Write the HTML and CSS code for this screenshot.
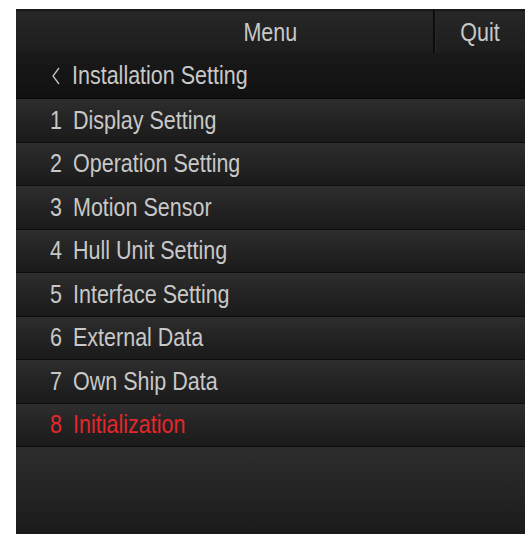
FILE: index.html
```html
<!DOCTYPE html>
<html>
<head>
<meta charset="utf-8">
<link rel="stylesheet" href="styles.css">
</head>
<body>
<div class="panel">
  <div class="topbar">
    <div class="title"><span class="cond cond-center">Menu</span></div>
    <div class="quit"><span class="cond cond-center">Quit</span></div>
  </div>
  <div class="back">
    <svg class="chev" width="8" height="18" viewBox="0 0 8 18"><path d="M7 1 L1 9 L7 17" fill="none" stroke="#c4c4c4" stroke-width="1.3"/></svg>
    <span class="cond">Installation Setting</span>
  </div>
  <ul class="menu">
    <li class="item"><span class="num"><span class="cond">1</span></span><span class="cond">Display Setting</span></li>
    <li class="item"><span class="num"><span class="cond">2</span></span><span class="cond">Operation Setting</span></li>
    <li class="item"><span class="num"><span class="cond">3</span></span><span class="cond">Motion Sensor</span></li>
    <li class="item"><span class="num"><span class="cond">4</span></span><span class="cond">Hull Unit Setting</span></li>
    <li class="item"><span class="num"><span class="cond">5</span></span><span class="cond">Interface Setting</span></li>
    <li class="item"><span class="num"><span class="cond">6</span></span><span class="cond">External Data</span></li>
    <li class="item"><span class="num"><span class="cond">7</span></span><span class="cond">Own Ship Data</span></li>
    <li class="item item-red"><span class="num"><span class="cond">8</span></span><span class="cond">Initialization</span></li>
  </ul>
  <div class="filler"></div>
</div>
</body>
</html>
```
FILE: styles.css
```css
html, body {
  margin: 0;
  padding: 0;
  background: #ffffff;
}
body {
  padding: 9px 0 0 16px;
  font-family: "Liberation Sans", Arial, sans-serif;
}
.panel {
  width: 509px;
  height: 525px;
  display: flex;
  flex-direction: column;
  background: #1c1c1c;
  color: #c8c8c8;
  font-size: 25px;
}
.cond {
  display: inline-block;
  transform: scaleX(0.86);
  transform-origin: left center;
  white-space: nowrap;
}
.cond-center {
  transform-origin: center center;
}
.topbar {
  height: 44px;
  display: flex;
  background: linear-gradient(#1a1a1a 0, #1a1a1a 2px, #272727 3px, #1d1d1d 100%);
}
.title {
  flex: 1;
  display: flex;
  align-items: center;
  justify-content: center;
  padding-left: 91px;
  padding-top: 3px;
  border-right: 2px solid #0c0c0c;
  box-shadow: 1px 0 0 #2a2a2a;
}
.quit {
  width: 90px;
  display: flex;
  align-items: center;
  justify-content: center;
  padding-top: 3px;
}
.back {
  height: 45px;
  display: flex;
  align-items: center;
  gap: 12px;
  padding-left: 36px;
  background: linear-gradient(#1a1a1a, #101010);
  border-bottom: 1px solid #0a0a0a;
}
.chev {
  margin-top: 1px;
}
.menu {
  list-style: none;
  margin: 0;
  padding: 0;
}
.item {
  height: 42.5px;
  display: flex;
  align-items: center;
  padding-left: 34px;
  background: linear-gradient(#2e2e2e 0, #262626 35%, #1a1a1a 100%);
  border-bottom: 1px solid #0d0d0d;
}
.num {
  width: 23px;
}
.item-red {
  color: #e5262a;
}
.filler {
  flex: 1;
  background: linear-gradient(#2d2d2d 0, #262626 40%, #1b1b1b 100%);
}
```
